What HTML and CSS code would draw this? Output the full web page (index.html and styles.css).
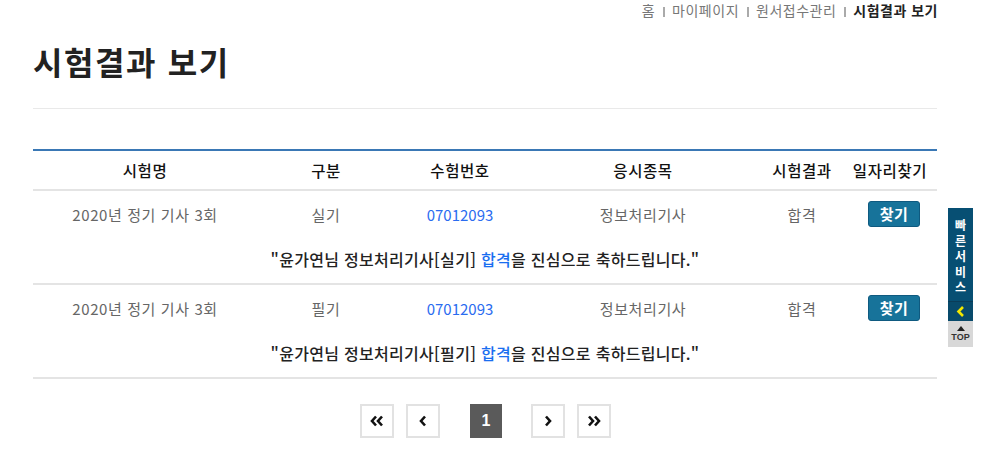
FILE: index.html
```html
<!DOCTYPE html>
<html lang="ko">
<head>
<meta charset="utf-8">
<title>시험결과 보기</title>
<link rel="stylesheet" href="styles.css">
</head>
<body>
<div class="page">
  <nav class="crumbs">
    <span>홈</span><i class="sep"></i><span>마이페이지</span><i class="sep"></i><span>원서접수관리</span><i class="sep"></i><strong>시험결과 보기</strong>
  </nav>
  <h1 class="title">시험결과 보기</h1>
  <div class="rule"></div>
  <table class="result">
    <colgroup>
      <col class="c1"><col class="c2"><col class="c3"><col class="c4"><col class="c5"><col class="c6">
    </colgroup>
    <thead>
      <tr><th>시험명</th><th>구분</th><th>수험번호</th><th>응시종목</th><th>시험결과</th><th>일자리찾기</th></tr>
    </thead>
    <tbody>
      <tr class="data"><td>2020년 정기 기사 3회</td><td>실기</td><td><a class="num">07012093</a></td><td>정보처리기사</td><td>합격</td><td><button class="find">찾기</button></td></tr>
      <tr class="msg"><td colspan="6">"윤가연님 정보처리기사[실기] <span class="pass">합격</span>을 진심으로 축하드립니다."</td></tr>
      <tr class="data"><td>2020년 정기 기사 3회</td><td>필기</td><td><a class="num">07012093</a></td><td>정보처리기사</td><td>합격</td><td><button class="find">찾기</button></td></tr>
      <tr class="msg"><td colspan="6">"윤가연님 정보처리기사[필기] <span class="pass">합격</span>을 진심으로 축하드립니다."</td></tr>
    </tbody>
  </table>
  <div class="pager">
    <a class="pg">
      <svg width="14" height="12" viewBox="0 0 14 12"><path d="M6 1.5 2 6l4 4.5M12 1.5 8 6l4 4.5" fill="none" stroke="#111" stroke-width="2.6"/></svg>
    </a>
    <a class="pg">
      <svg width="8" height="12" viewBox="0 0 8 12"><path d="M6 1.5 2 6l4 4.5" fill="none" stroke="#111" stroke-width="2.6"/></svg>
    </a>
    <a class="pg active">1</a>
    <a class="pg">
      <svg width="8" height="12" viewBox="0 0 8 12"><path d="M2 1.5 6 6l-4 4.5" fill="none" stroke="#111" stroke-width="2.6"/></svg>
    </a>
    <a class="pg">
      <svg width="14" height="12" viewBox="0 0 14 12"><path d="M2 1.5 6 6l-4 4.5M8 1.5 12 6l-4 4.5" fill="none" stroke="#111" stroke-width="2.6"/></svg>
    </a>
  </div>
</div>
<aside class="quick">
  <div class="quick-label">빠<br>른<br>서<br>비<br>스</div>
  <div class="quick-toggle">
    <svg width="9" height="11" viewBox="0 0 9 11"><path d="M7 1 2.5 5.5 7 10" fill="none" stroke="#f2e600" stroke-width="2.6"/></svg>
  </div>
  <div class="quick-top">
    <svg width="8" height="5" viewBox="0 0 8 5"><path d="M4 0 8 5H0z" fill="#222"/></svg>
    <span>TOP</span>
  </div>
</aside>
</body>
</html>
```
FILE: styles.css
```css
* { box-sizing: border-box; }
html, body { margin: 0; padding: 0; background: #fff; }
body {
  font-family: "Noto Sans CJK KR", "Noto Sans", sans-serif;
  color: #222;
  width: 985px;
  height: 472px;
  overflow: hidden;
}
.page {
  width: 904px;
  margin-left: 33px;
}
.crumbs {
  display: flex;
  justify-content: flex-end;
  align-items: center;
  height: 20px;
  font-size: 14px;
  color: #777;
  margin-right: -1px;
  letter-spacing: 0.5px;
}
.crumbs strong { color: #222; font-weight: 700; }
.crumbs .sep {
  display: inline-block;
  width: 2px;
  height: 10px;
  background: #aaa;
  margin: 4px 7px 0 8px;
}
.title {
  margin: 19px 0 0;
  font-size: 32px;
  line-height: 44px;
  font-weight: 700;
  color: #222;
  letter-spacing: 1.6px;
}
.rule {
  height: 1px;
  background: #e9e9e9;
  margin-top: 25px;
}
.result {
  width: 904px;
  margin-top: 40px;
  border-collapse: collapse;
  table-layout: fixed;
  border-top: 2px solid #3a78b5;
}
.c1 { width: 224px; }
.c2 { width: 138px; }
.c3 { width: 130px; }
.c4 { width: 236px; }
.c5 { width: 82px; }
.c6 { width: 94px; }
.result th {
  height: 40px;
  font-size: 15.5px;
  font-weight: 500;
  color: #111;
  text-align: center;
  border-bottom: 2px solid #e4e4e4;
  padding: 0 0 1px;
  letter-spacing: 0.6px;
}
.result td {
  text-align: center;
  padding: 0;
  font-size: 15px;
  color: #666;
  letter-spacing: 0.6px;
}
.data td { height: 46px; padding-top: 1px; }
.msg td {
  height: 48px;
  font-size: 16px;
  font-weight: 500;
  color: #222;
  border-bottom: 2px solid #e4e4e4;
  padding-bottom: 1px;
  letter-spacing: 0.3px;
}
.num { color: #2b6cf0; text-decoration: none; letter-spacing: 0; }
.pass { color: #1a6ef0; }
.find {
  font-family: inherit;
  width: 52px;
  height: 26px;
  border: 1px solid #0f5a80;
  border-radius: 3px;
  background: #17739a;
  color: #fff;
  font-size: 15px;
  font-weight: 700;
  padding: 0;
  margin-left: 8px;
  margin-top: -1px;
  letter-spacing: 0.5px;
}
.pager {
  display: flex;
  justify-content: center;
  align-items: center;
  margin-top: 25px;
  margin-left: 1px;
}
.pg {
  display: flex;
  align-items: center;
  justify-content: center;
  width: 34px;
  height: 34px;
  border: 2px solid #e2e2e2;
  background: #fff;
  margin: 0 6px;
  font-family: "Liberation Sans", sans-serif;
}
.pg:nth-child(3) { margin-left: 30px; margin-right: 29px; }
.pg:nth-child(2) { margin-right: 0; }
.pg:nth-child(4) { margin-left: 0; }
.pg.active {
  background: #5a5a5a;
  border-color: #5a5a5a;
  color: #fff;
  font-weight: 700;
  font-size: 16px;
  width: 32px;
}
.quick {
  position: absolute;
  left: 948px;
  top: 208px;
  width: 25px;
  display: flex;
  flex-direction: column;
}
.quick-label {
  background: #074f73;
  color: #fff;
  font-size: 12px;
  font-weight: 700;
  line-height: 15.5px;
  text-align: center;
  height: 94px;
  padding-top: 9px;
  border-bottom: 1px solid #0a3c58;
}
.quick-toggle {
  background: #084a6b;
  height: 19px;
  display: flex;
  align-items: center;
  justify-content: center;
}
.quick-top {
  background: #d8d8d8;
  height: 26px;
  display: flex;
  flex-direction: column;
  align-items: center;
  justify-content: center;
  gap: 1px;
}
.quick-top span {
  font-family: "Liberation Sans", sans-serif;
  font-size: 9px;
  font-weight: 700;
  color: #333;
  line-height: 10px;
}
```
